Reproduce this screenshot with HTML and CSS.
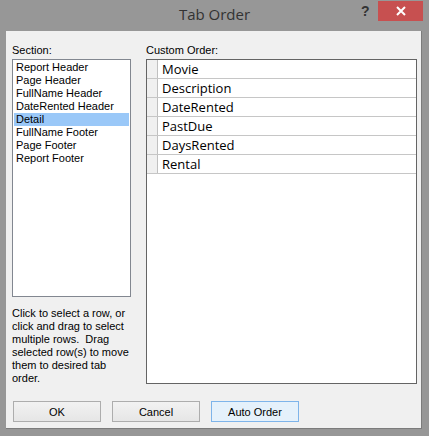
FILE: index.html
```html
<!DOCTYPE html>
<html lang="en">
<head>
    <meta charset="UTF-8">
    <title>Tab Order</title>
    <link rel="stylesheet" href="styles.css">
</head>
<body>
    <div class="window">
        <div class="title-bar">
            <span class="title">Tab Order</span>
            <span class="help">?</span>
            <span class="close">
                <svg width="10" height="10" viewBox="0 0 10 10">
                    <path d="M1 1 L9 9 M9 1 L1 9" stroke="#fff" stroke-width="2"/>
                </svg>
            </span>
        </div>
        <div class="client">
            <div class="panes">
                <div class="left-pane">
                    <div class="label">Section:</div>
                    <ul class="list-box">
                        <li>Report Header</li>
                        <li>Page Header</li>
                        <li>FullName Header</li>
                        <li>DateRented Header</li>
                        <li class="selected">Detail</li>
                        <li>FullName Footer</li>
                        <li>Page Footer</li>
                        <li>Report Footer</li>
                    </ul>
                    <p class="hint">Click to select a row, or<br>click and drag to select<br>multiple rows.&nbsp; Drag<br>selected row(s) to move<br>them to desired tab<br>order.</p>
                </div>
                <div class="right-pane">
                    <div class="label">Custom Order:</div>
                    <div class="grid">
                        <div class="row"><span class="selector"></span><span class="cell">Movie</span></div>
                        <div class="row"><span class="selector"></span><span class="cell">Description</span></div>
                        <div class="row"><span class="selector"></span><span class="cell">DateRented</span></div>
                        <div class="row"><span class="selector"></span><span class="cell">PastDue</span></div>
                        <div class="row"><span class="selector"></span><span class="cell">DaysRented</span></div>
                        <div class="row"><span class="selector"></span><span class="cell">Rental</span></div>
                    </div>
                </div>
            </div>
            <div class="buttons">
                <button>OK</button>
                <button>Cancel</button>
                <button class="default">Auto Order</button>
            </div>
        </div>
    </div>
</body>
</html>
```

FILE: styles.css
```css
* {
    margin: 0;
    padding: 0;
    box-sizing: border-box;
}

body {
    width: 429px;
    height: 436px;
    background: #979797;
    font-family: 'Liberation Sans', Arial, sans-serif;
    font-size: 11px;
    color: #000;
    overflow: hidden;
}

.window {
    width: 429px;
    height: 436px;
}

.title-bar {
    position: relative;
    height: 31px;
    text-align: center;
}

.title {
    display: inline-block;
    padding-top: 4px;
    font-family: 'Open Sans', sans-serif;
    font-size: 15px;
    color: #333;
}

.help {
    position: absolute;
    left: 361px;
    top: 3px;
    font-family: 'Liberation Sans', Arial, sans-serif;
    font-weight: bold;
    font-size: 14px;
    color: #333;
}

.close {
    position: absolute;
    left: 378px;
    top: 1px;
    width: 45px;
    height: 20px;
    background: #c75050;
    display: flex;
    align-items: center;
    justify-content: center;
}

.client {
    margin-left: 6px;
    width: 416px;
    height: 398px;
    background: #f0f0f0;
    border-right: 1px solid #7c7c7c;
    border-bottom: 1px solid #7c7c7c;
    padding: 13px 0 0 6px;
}

.panes {
    display: flex;
    gap: 15px;
}

.left-pane {
    width: 119px;
}

.right-pane {
    width: 271px;
}

.label {
    height: 15px;
    line-height: 13px;
}

.list-box {
    list-style: none;
    height: 238px;
    background: #fff;
    border: 1px solid #828790;
    padding: 1px;
}

.list-box li {
    height: 13px;
    line-height: 13px;
    padding-left: 2px;
    white-space: nowrap;
}

.list-box .selected {
    background: #9ac8f8;
}

.hint {
    margin-top: 10px;
    line-height: 13px;
}

.grid {
    height: 325px;
    background: #fff;
    border: 1px solid #646464;
}

.row {
    display: flex;
    height: 19px;
    border-bottom: 1px solid #c6c6c6;
}

.selector {
    width: 11px;
    background: #f0f0f0;
    border-right: 1px solid #c0c0c0;
}

.cell {
    padding-left: 4px;
    font-family: 'Open Sans', sans-serif;
    font-size: 13px;
    line-height: 18px;
}

.buttons {
    display: flex;
    gap: 11px;
    margin-top: 16px;
    padding-left: 1px;
}

.buttons button {
    width: 88px;
    height: 21px;
    border: 1px solid #adadad;
    background: linear-gradient(#f2f2f2, #e6e6e6);
    font-family: 'Liberation Sans', Arial, sans-serif;
    font-size: 11px;
    color: #000;
}

.buttons .default {
    border-color: #7eb4ea;
    background: #e5f1fb;
}
```
